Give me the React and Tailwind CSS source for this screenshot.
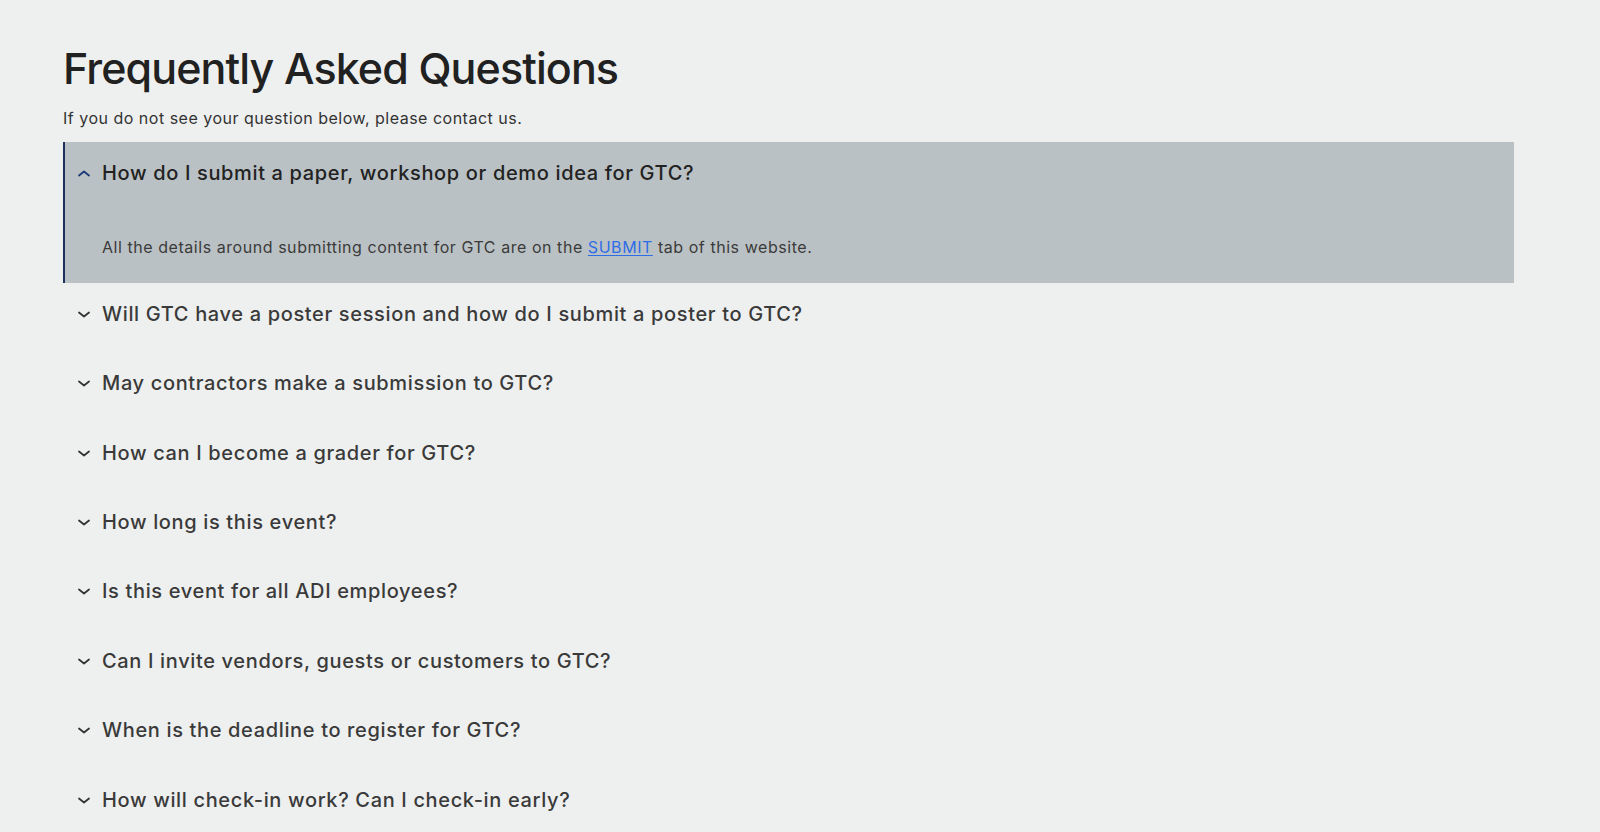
import React from "react";

const questions = [
  "Will GTC have a poster session and how do I submit a poster to GTC?",
  "May contractors make a submission to GTC?",
  "How can I become a grader for GTC?",
  "How long is this event?",
  "Is this event for all ADI employees?",
  "Can I invite vendors, guests or customers to GTC?",
  "When is the deadline to register for GTC?",
  "How will check-in work? Can I check-in early?",
];

function Chevron({ up, color }) {
  return (
    <svg
      width="24"
      height="24"
      viewBox="0 0 24 24"
      fill="none"
      stroke={color}
      strokeWidth="1.8"
      strokeLinecap="round"
      strokeLinejoin="round"
      className="shrink-0"
    >
      {up ? (
        <path d="M7 14.5 12 10.5 17 14.5" />
      ) : (
        <path d="M7 10.5 12 14.5 17 10.5" />
      )}
    </svg>
  );
}

export default function App() {
  return (
    <div className="min-h-screen w-full bg-[#eef0ef] font-['Inter',sans-serif] overflow-hidden">
      <div className="ml-[63px] w-[1451px] pt-[43px]">
        <h1 className="text-[43px] leading-[1.2] font-medium text-[#212121] tracking-[-0.9px]">
          Frequently Asked Questions
        </h1>
        <p className="mt-[11px] text-[16px] leading-6 text-[#333333] tracking-[0.5px]">
          If you do not see your question below, please contact us.
        </p>

        <div className="mt-[12.5px]">
          <div className="bg-[#bac1c4] border-l-2 border-[#1e2f5c] pl-[7px] pt-[17px] pb-[23.7px]">
            <div className="flex items-center gap-[6px] h-7">
              <Chevron up color="#1d3a78" />
              <span className="text-[20px] leading-7 font-medium text-[#222222] tracking-[0.65px]">
                How do I submit a paper, workshop or demo idea for GTC?
              </span>
            </div>
            <p className="mt-[48px] ml-[30px] text-[16px] leading-6 text-[#3b3b3b] tracking-[0.55px]">
              All the details around submitting content for GTC are on the{" "}
              <a href="#" className="text-[#2f6de6] underline underline-offset-2">
                SUBMIT
              </a>{" "}
              tab of this website.
            </p>
          </div>

          {questions.map((q) => (
            <div
              key={q}
              className="border-l-2 border-transparent pl-[7px] pt-[17px] pb-[24.4px]"
            >
              <div className="flex items-center gap-[6px] h-7">
                <Chevron color="#333333" />
                <span className="text-[20px] leading-7 font-medium text-[#3a3a3a] tracking-[0.65px]">
                  {q}
                </span>
              </div>
            </div>
          ))}
        </div>
      </div>
    </div>
  );
}
